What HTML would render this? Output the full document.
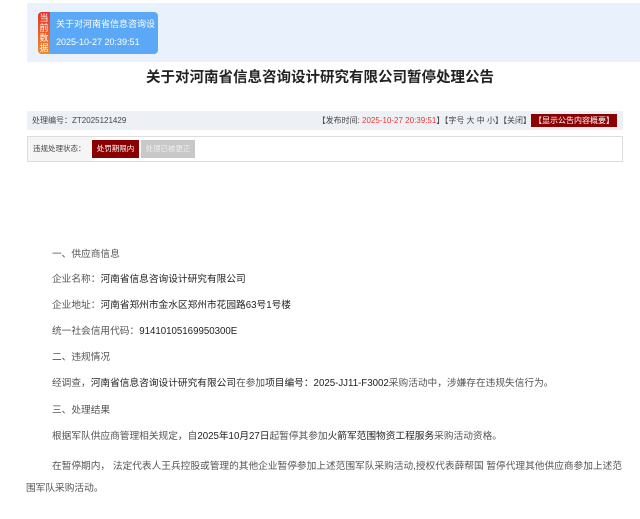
<!DOCTYPE html>
<html><head><meta charset="utf-8"><style>
*{margin:0;padding:0;box-sizing:border-box}
body{width:640px;height:519px;background:#fff;font-family:"Liberation Sans","Noto Sans CJK SC",sans-serif;position:relative;overflow:hidden;color:#555}
.band{position:absolute;left:27px;top:3px;width:613px;height:59px;background:#e8f1fc}
.card{position:absolute;left:38px;top:12px;width:120px;height:42px;background:#5ba9f6;border-radius:4px;overflow:hidden}
.tag{position:absolute;left:0;top:0;width:12px;height:42px;background:linear-gradient(#e8322a,#f08a2a);color:#fff;font-size:9px;line-height:10px;text-align:center;padding-top:1px}
.card .t{position:absolute;left:18px;top:5px;color:#fff;font-size:9px;white-space:nowrap}
.card .d{position:absolute;left:18px;top:25px;color:#fff;font-size:9px}
h1{position:absolute;left:0;width:640px;top:66px;text-align:center;font-size:14.5px;color:#222;font-weight:bold}
.bar{position:absolute;left:27px;top:111px;width:596px;height:19px;background:#edf1f5;font-size:8px;color:#444;line-height:19px;white-space:nowrap}
.bar .l{position:absolute;left:5px}
.bar .r{position:absolute;right:6px;top:0}
.red{color:#e33}
.btnr{display:inline-block;background:#8b0000;color:#fff;padding:0 3px;line-height:13px}
.st{position:absolute;left:27px;top:136px;width:596px;height:26px;border:1px solid #ddd;font-size:7.5px;white-space:nowrap}
.st .lab{position:absolute;left:0;top:0;width:64px;height:24px;background:#f5f5f5;line-height:24px;padding-left:5px;color:#444}
.b1{position:absolute;left:64px;top:3px;width:47px;height:18px;background:#8b0000;color:#fff;line-height:18px;text-align:center}
.b2{position:absolute;left:113px;top:3px;width:54px;height:18px;background:#c8c8c8;color:#eee;line-height:18px;text-align:center}
p{position:absolute;left:52px;font-size:9.7px;white-space:nowrap;color:#555}
b{font-weight:normal;color:#222}
</style></head><body>
<div class="band"></div>
<div class="card"><div class="tag">当前数据</div><div class="t">关于对河南省信息咨询设</div><div class="d">2025-10-27 20:39:51</div></div>
<h1>关于对河南省信息咨询设计研究有限公司暂停处理公告</h1>
<div class="bar"><span class="l">处理编号：ZT2025121429</span><span class="r">【发布时间: <span class="red">2025-10-27 20:39:51</span>】【字号 大 中 小】【关闭】<span class="btnr">【显示公告内容概要】</span></span></div>
<div class="st"><div class="lab">违规处理状态：</div><div class="b1">处罚期限内</div><div class="b2">处理已被更正</div></div>
<p style="top:246px">一、供应商信息</p>
<p style="top:271px">企业名称：<b>河南省信息咨询设计研究有限公司</b></p>
<p style="top:297px">企业地址：<b>河南省郑州市金水区郑州市花园路63号1号楼</b></p>
<p style="top:323px">统一社会信用代码：<b>91410105169950300E</b></p>
<p style="top:349px">二、违规情况</p>
<p style="top:375px">经调查，<b>河南省信息咨询设计研究有限公司</b>在参加<b>项目编号：2025-JJ11-F3002</b>采购活动中，涉嫌存在违规失信行为。</p>
<p style="top:402px">三、处理结果</p>
<p style="top:428px">根据军队供应商管理相关规定，自<b>2025年10月27日</b>起暂停其参加<b>火箭军范围物资工程服务</b>采购活动资格。</p>
<p style="top:458px">在暂停期内， 法定代表人王兵控股或管理的其他企业暂停参加上述范围军队采购活动,授权代表薛帮国 暂停代理其他供应商参加上述范</p>
<p style="top:480px;left:26px">围军队采购活动。</p>
</body></html>
